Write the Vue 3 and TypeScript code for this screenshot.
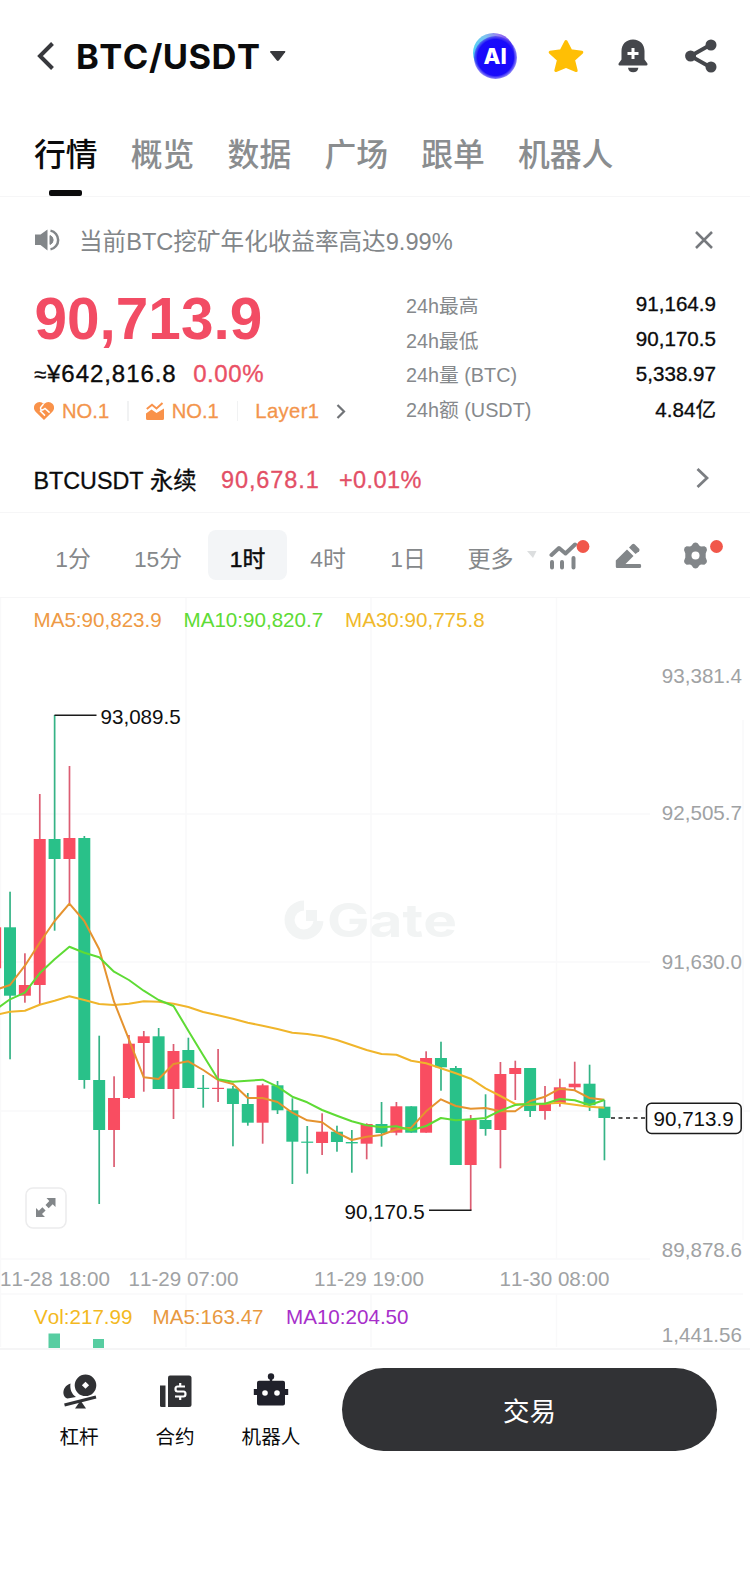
<script setup lang="ts">
import { ref } from 'vue';

type Candle = {
  up: boolean;
  high: number;
  top: number;
  bottom: number;
  low: number;
};

const tabs = ['行情', '概览', '数据', '广场', '跟单', '机器人'];
const activeTab = ref('行情');

const stats = [
  { label: '24h最高', value: '91,164.9' },
  { label: '24h最低', value: '90,170.5' },
  { label: '24h量 (BTC)', value: '5,338.97' },
  { label: '24h额 (USDT)', value: '4.84亿' },
];

const periods = ['1分', '15分', '1时', '4时', '1日'];
const activePeriod = ref('1时');

// [up, high, body top, body bottom, low] in chart units
const rawCandles: [number, number, number, number, number][] = [
  [1, 927.3, 927.3, 968.3, 968.3],
  [0, 891.7, 927.3, 995.7, 1059.3],
  [1, 953.3, 985, 995.7, 1002.7],
  [1, 794, 839, 985, 1004.3],
  [0, 715, 839, 859, 930.7],
  [1, 766, 838, 859, 903.3],
  [0, 836, 838, 1080, 1088.7],
  [0, 1035.7, 1080, 1130, 1204],
  [1, 1076.3, 1098, 1130, 1167],
  [1, 1035, 1043.7, 1098, 1099],
  [1, 1031, 1036.3, 1043, 1091.7],
  [0, 1028, 1036.3, 1089, 1089],
  [1, 1044, 1051, 1089, 1119],
  [0, 1037.7, 1050, 1088, 1088],
  [0, 1075, 1087.8, 1089, 1107.7],
  [1, 1049, 1087.8, 1089, 1102],
  [0, 1086, 1088.5, 1104, 1146.3],
  [0, 1093, 1104, 1122.7, 1125.7],
  [1, 1083.7, 1085.3, 1122.7, 1143.7],
  [0, 1081, 1085.3, 1110.3, 1114],
  [0, 1098.3, 1110.3, 1141.7, 1184],
  [0, 1126, 1141.6, 1142.8, 1173.7],
  [1, 1113.3, 1131.7, 1143, 1155],
  [0, 1125.7, 1131.7, 1142, 1151.7],
  [0, 1130, 1142, 1143.4, 1172.7],
  [1, 1123.3, 1124, 1143.7, 1159.3],
  [0, 1102, 1124, 1133, 1146.7],
  [1, 1102, 1106.3, 1132.7, 1135.3],
  [0, 1106.3, 1106.3, 1132.7, 1132.7],
  [1, 1051.3, 1058, 1132.7, 1132.7],
  [0, 1041.7, 1058, 1067.3, 1090.7],
  [0, 1066, 1068, 1165, 1165],
  [1, 1115, 1119.7, 1165, 1210.3],
  [0, 1094.3, 1120, 1129, 1135.7],
  [1, 1062, 1074, 1130, 1168.3],
  [1, 1060.7, 1068, 1074, 1100],
  [0, 1068, 1068, 1111, 1117],
  [1, 1086, 1103.3, 1111, 1119.7],
  [1, 1078.7, 1087.3, 1103.3, 1106.7],
  [1, 1061.7, 1083.7, 1087.3, 1090],
  [0, 1064.7, 1083.7, 1105.3, 1111],
  [0, 1100, 1106.7, 1118, 1160.3],
];

const candles: Candle[] = rawCandles.map(([up, high, top, bottom, low]) => ({
  up: up === 1,
  high,
  top,
  bottom,
  low,
}));

const STEP = 14.86;
const centerX = (i: number) => 10 + (i - 1) * STEP;

const toPoints = (ys: number[]) =>
  ys.map((y, i) => `${centerX(i).toFixed(1)},${y}`).join(' ');

const averages = [
  {
    color: '#f0b52b',
    points: toPoints([
      1015, 1011.7, 1010.7, 1004.7, 1000.7, 996.3, 1000, 1004, 1005, 1003.7, 1001.3, 1001.7, 1003.7,
      1007, 1012, 1015.3, 1018.7, 1022.7, 1025.7, 1029, 1032.7, 1034, 1036.3, 1040, 1045, 1050,
      1054, 1054.7, 1060.7, 1063.3, 1068.3, 1073.3, 1078.7, 1088.3, 1096, 1104, 1104.7, 1103.7,
      1102.7, 1104.7, 1106.7, 1107.7,
    ]),
  },
  {
    color: '#e5932f',
    points: toPoints([
      990, 985, 965.7, 942.7, 921, 903.7, 921, 949.3, 1001.7, 1039.3, 1077.3, 1079, 1064, 1061.3,
      1070, 1080, 1084, 1098, 1098, 1102, 1112.7, 1120.3, 1122.3, 1132.7, 1140, 1136.7, 1135,
      1129.3, 1127.7, 1111.3, 1099.3, 1106, 1108.7, 1108, 1111.3, 1111.3, 1101, 1096.7, 1088.7,
      1090.3, 1098, 1099.7,
    ]),
  },
  {
    color: '#5edb35',
    points: toPoints([
      1010, 999.3, 992.7, 973.3, 959.3, 946.7, 952.7, 957.3, 971.7, 980, 990.7, 1000, 1006, 1030.7,
      1055.3, 1079.3, 1081.7, 1080.7, 1079.7, 1086.7, 1096.7, 1102.3, 1110, 1115.7, 1121.3, 1125.3,
      1127.3, 1126.3, 1130.3, 1126, 1118, 1120.3, 1119.3, 1118, 1110.7, 1105, 1103.7, 1103.7, 1099,
      1100.3, 1105, 1100,
    ]),
  },
];

const priceAxis = [
  { y: 683.3, text: '93,381.4' },
  { y: 820.3, text: '92,505.7' },
  { y: 969, text: '91,630.0' },
  { y: 1257, text: '89,878.6' },
  { y: 1342, text: '1,441.56' },
];

const timeAxis = [
  { x: 0, text: '11-28 18:00' },
  { x: 128.5, text: '11-29 07:00' },
  { x: 314, text: '11-29 19:00' },
  { x: 499.5, text: '11-30 08:00' },
];
</script>

<template>
  <div class="page">
    <header class="header">
      <svg class="back" width="20" height="32" viewBox="0 0 20 32">
        <path d="M16.500 3.500 4 16l12.500 12.500" fill="none" stroke="#38393d" stroke-width="4" />
      </svg>
      <h1 class="pair">BTC/USDT</h1>
      <svg class="caret" width="18" height="12" viewBox="0 0 18 12">
        <path d="M2 1h13.500q1.500 0 .6 1.300L10 10.200q-1.200 1.400-2.400 0L1.300 2.300Q.5 1 2 1z" fill="#38393d" />
      </svg>
      <div class="actions">
        <svg width="46" height="50" viewBox="0 0 46 50">
          <defs>
            <linearGradient id="aiHalo" x1="0" y1=".5" x2="1" y2=".1">
              <stop offset="0" stop-color="#4fd2f5" />
              <stop offset=".4" stop-color="#7cc4ee" />
              <stop offset=".7" stop-color="#9a7cf0" />
              <stop offset="1" stop-color="#5a2df0" />
            </linearGradient>
            <radialGradient id="aiBody" cx=".5" cy=".5" r=".5">
              <stop offset="0" stop-color="#1405ff" />
              <stop offset=".84" stop-color="#1a0cfa" />
              <stop offset="1" stop-color="#3a2df0" stop-opacity=".55" />
            </radialGradient>
          </defs>
          <ellipse cx="21.500" cy="22" rx="20.500" ry="20" fill="url(#aiHalo)" />
          <ellipse cx="23.500" cy="26.500" rx="21.500" ry="21.500" fill="url(#aiBody)" />
          <text x="23.200" y="33" class="ai-text" text-anchor="middle">AI</text>
        </svg>
        <svg width="36" height="34" viewBox="0 0 36 34">
          <path
            d="M18 2.500l4.800 9.300 11 1.500-8.300 7.500 2.700 10.700L18 27.400 7.800 31.500l2.700-10.700L2.200 13.300l11-1.500z"
            fill="#ffbf05"
            stroke="#ffbf05"
            stroke-width="3"
            stroke-linejoin="round"
          />
        </svg>
        <svg width="30" height="34" viewBox="0 0 30 34">
          <path
            d="M15 .5C8 .5 3.500 5.500 3.500 12v8.500L.6 24.600Q0 26.500 1.500 26.500h27q1.500 0 .9-1.900l-2.900-4.100V12C26.500 5.500 22 .5 15 .5z"
            fill="#45474c"
          />
          <path d="M10 28.700h10.400q-.8 4.600-5.200 4.600T10 28.700z" fill="#45474c" />
          <path d="M15 9v11M9.500 14.500h11" stroke="#fff" stroke-width="3" />
        </svg>
        <svg width="32" height="34" viewBox="0 0 32 34">
          <path d="M26 5.500 5.500 17 26 28.500" fill="none" stroke="#45474c" stroke-width="3.800" />
          <circle cx="26" cy="6" r="5.500" fill="#45474c" />
          <circle cx="5.600" cy="17" r="5.500" fill="#45474c" />
          <circle cx="26" cy="28" r="5.500" fill="#45474c" />
        </svg>
      </div>
    </header>

    <nav class="tabs">
      <button
        v-for="tab in tabs"
        :key="tab"
        class="tab"
        :class="{ active: tab === activeTab }"
        @click="activeTab = tab"
      >
        {{ tab }}
      </button>
    </nav>

    <div class="notice">
      <svg width="26" height="22" viewBox="0 0 26 22">
        <path d="M0 5.500h5.500L12.500.5v21L5.500 16H0z" fill="#828689" />
        <path d="M15 6.500a4.800 4.800 0 0 1 0 9z" fill="#828689" stroke="#828689" />
        <path d="M15.500 1.600a9.600 9.600 0 0 1 0 18.800" fill="none" stroke="#828689" stroke-width="2.500" />
      </svg>
      <span class="notice-text">当前BTC挖矿年化收益率高达9.99%</span>
      <svg class="close" width="18" height="18" viewBox="0 0 18 18">
        <path d="M1 1l16 16M17 1L1 17" stroke="#76797d" stroke-width="2.500" />
      </svg>
    </div>

    <section class="summary">
      <div class="quote">
        <div class="price">90,713.9</div>
        <div class="fiat">
          <span class="fiat-value"><i class="approx">≈</i>¥642,816.8</span>
          <span class="change">0.00%</span>
        </div>
        <div class="badges">
          <svg width="20" height="18" viewBox="0 0 20 18">
            <path d="M10 18 1.600 9.800A5.600 5.600 0 0 1 9.600 1.700L10 2l.4-.3a5.600 5.600 0 0 1 8 8.100z" fill="#f9924a" />
            <path d="M9.500 2 6.600 5.600q-.4 3 2.400 2.200l2-1.400 4.600 4.200M6 8.600l5 5" fill="none" stroke="#fff" stroke-width="1.500" />
          </svg>
          <span class="rank">NO.1</span>
          <i class="sep"></i>
          <svg width="18" height="18" viewBox="0 0 18 18">
            <path d="M0 11.500l5.500-4 5 3.500L18 6.500V16.500q0 1.500-1.500 1.500h-15Q0 18 0 16.500z" fill="#f9924a" />
            <path d="M.8 7 6 2.800l4.500 3.700L16.500 1" fill="none" stroke="#f9924a" stroke-width="2" />
          </svg>
          <span class="rank">NO.1</span>
          <i class="sep"></i>
          <span class="layer">Layer1</span>
          <svg class="more" width="10" height="15" viewBox="0 0 10 15">
            <path d="M1.500 1l6.500 6.500L1.500 14" fill="none" stroke="#707377" stroke-width="2.200" />
          </svg>
        </div>
      </div>
      <dl class="stats">
        <div v-for="item in stats" :key="item.label" class="stat">
          <dt>{{ item.label }}</dt>
          <dd>{{ item.value }}</dd>
        </div>
      </dl>
    </section>

    <div class="perp">
      <span class="perp-name">BTCUSDT 永续</span>
      <span class="perp-price">90,678.1</span>
      <span class="perp-change">+0.01%</span>
      <svg width="13" height="20" viewBox="0 0 13 20">
        <path d="M1.500 1l9.500 9-9.500 9" fill="none" stroke="#7b7e82" stroke-width="2.800" />
      </svg>
    </div>

    <div class="periods">
      <button
        v-for="period in periods"
        :key="period"
        class="period"
        :class="{ active: period === activePeriod }"
        @click="activePeriod = period"
      >
        {{ period }}
      </button>
      <span class="period-more">更多</span>
      <svg class="tri" width="10" height="8" viewBox="0 0 10 8">
        <path d="M0 0h9.500L6 7z" fill="#dcdedf" />
      </svg>
      <div class="tools">
        <svg width="42" height="32" viewBox="0 0 42 32">
          <path
            d="M2.500 16 10 9l6.500 5.500L26 5.500"
            fill="none"
            stroke="#828689"
            stroke-width="4"
            stroke-linecap="round"
            stroke-linejoin="round"
          />
          <path d="M3 23v5.500M13 23v5.500M24.500 19v9.500" stroke="#828689" stroke-width="4" stroke-linecap="round" />
          <circle cx="34" cy="7.500" r="6.400" fill="#f1574a" />
        </svg>
        <svg width="28" height="32" viewBox="0 0 28 32">
          <path d="M.8 21.500 12 10.500l6.500 6.500-8 8H25q1.200 0 1.200 2t-1.200 2H2Q.8 29 .8 27.500z" fill="#828689" />
          <path d="M14 8.500l3.200-3.200q1.200-1 2.400 0l4.500 4.500q1 1.200 0 2.400L20.500 15z" fill="#828689" />
        </svg>
        <svg width="42" height="32" viewBox="0 0 42 32">
          <path
            d="M11.300 4.200q2.200-1.500 4.400 0l1.800 2.600 1.500.8 3.400-.3q2.600.8 2.600 3.600l-1.300 3.600v4l1.300 3.600q0 2.800-2.600 3.600l-3.400-.3-1.500.8-1.800 2.600q-2.200 1.500-4.400 0L9.500 26.200 8 25.400l-3.400.3Q2 24.900 2 22.100l1.300-3.600v-4L2 10.900q0-2.800 2.600-3.600L8 7.600l1.500-.8z"
            fill="#828689"
          />
          <circle cx="13.500" cy="16.500" r="4" fill="#fff" />
          <circle cx="34.500" cy="7.500" r="6.400" fill="#f1574a" />
        </svg>
      </div>
    </div>

    <svg class="chart" width="750" height="750" viewBox="0 598 750 750">
      <g stroke="#f9f9fa" stroke-width="1.500">
        <path d="M186 598V1259M371 598V1259M556.500 598V1259" />
        <path d="M0 814H650M0 962H650M0 1111H750M0 1259H650M0 1294H743" />
        <path d="M186 1294V1347M371 1294V1347M556.500 1294V1347M.5 598V1347M743 720V1240" />
      </g>

      <g class="watermark">
        <path
          d="M304 905.500a14.500 14.500 0 1 0 14.500 15.500"
          fill="none"
          stroke="#f2f4f4"
          stroke-width="10"
        />
        <path d="M306 910h11v11h-11z" fill="#f2f4f4" />
        <text x="327" y="937" textLength="130" lengthAdjust="spacingAndGlyphs">Gate</text>
      </g>

      <g v-for="(c, i) in candles" :key="i" :fill="c.up ? '#f94d61' : '#29c189'">
        <rect :x="centerX(i) - 0.8" :y="c.high" width="1.700" :height="c.low - c.high" :class="c.up ? 'wick-up' : 'wick-down'" />
        <rect :x="centerX(i) - 6" :y="c.top" width="12" :height="c.bottom - c.top" />
      </g>

      <polyline
        v-for="ma in averages"
        :key="ma.color"
        :points="ma.points"
        :stroke="ma.color"
        fill="none"
        stroke-width="2"
        stroke-linejoin="round"
      />

      <path d="M54.500 715.300H96.500M429 1210.300H471.500" stroke="#1b1b1b" stroke-width="1.400" />
      <g class="mark">
        <text x="100.500" y="724">93,089.5</text>
        <text x="344.500" y="1219.300">90,170.5</text>
      </g>

      <path d="M611 1118H646" stroke="#1b1b1b" stroke-width="1.500" stroke-dasharray="4 3.500" />
      <rect x="646.500" y="1103.300" width="94.700" height="30.200" rx="5" fill="#fff" stroke="#1b1b1b" stroke-width="1.500" />
      <text class="mark" x="653.500" y="1126.300">90,713.9</text>

      <g class="legend">
        <text x="33.500" y="627.300" fill="#ee9a45">MA5:90,823.9</text>
        <text x="183.500" y="627.300" fill="#5edb35">MA10:90,820.7</text>
        <text x="345" y="627.300" fill="#f0b92b">MA30:90,775.8</text>
        <text x="34" y="1324.300" fill="#f3b91f">Vol:217.99</text>
        <text x="152.500" y="1324.300" fill="#e8993f">MA5:163.47</text>
        <text x="286" y="1324.300" fill="#a72fca">MA10:204.50</text>
      </g>

      <text v-for="p in priceAxis" :key="p.text" class="axis" x="742" :y="p.y" text-anchor="end">{{ p.text }}</text>
      <text v-for="t in timeAxis" :key="t.text" class="axis" :x="t.x" y="1285.500">{{ t.text }}</text>

      <path d="M48.500 1333.500h11.500V1348H48.500zM93 1339h11V1348H93z" fill="#57cda1" />

      <rect x="26" y="1188" width="40" height="40" rx="7" fill="#fff" stroke="#ececed" stroke-width="1.500" />
      <path
        d="M46.500 1198h9v9l-2.800-2.800-4 4-3.200-3.200 3.800-4zM36 1208l2.800 2.800 3.600-3.600 3.200 3.200-3.600 3.600L45 1217h-9z"
        fill="#828689"
      />
    </svg>

    <footer class="footer">
      <div class="entry">
        <svg width="36" height="38" viewBox="0 0 36 38">
          <path d="M9.500 11.500c-5 1.500-7.700 6-7 10.500.3 2.300 2 4 4 4.600l8.500-1.600c-4.500-3-6.300-8-5.500-13.500z" fill="#303134" />
          <path
            d="M24.500 2.500a10.800 10.800 0 1 1 0 21.600 10.800 10.800 0 0 1 0-21.600zM24.500 9.800l-3.600 3.500 3.600 3.500 3.600-3.500z"
            fill="#303134"
            fill-rule="evenodd"
          />
          <path d="M3.500 33 35 25" stroke="#303134" stroke-width="3.200" />
          <path d="M19.500 28.500l5.500 8H14z" fill="#303134" />
        </svg>
        <span>杠杆</span>
      </div>
      <div class="entry">
        <svg width="36" height="38" viewBox="0 0 36 38">
          <path d="M3 13.500h5.500V35H4.500Q3 35 3 33.500z" fill="#303134" />
          <path d="M13 3.500h19q2.500 0 2.500 2.500v26.500q0 2.500-2.500 2.500H11V5.500q0-2 2-2z" fill="#303134" />
          <path
            d="M28 14.500h-7.500q-2 0-2 2.500t2 2.500h6q2 0 2 2.500t-2 2.500H18M23.200 11v3.500M23.200 24.500V28"
            fill="none"
            stroke="#fff"
            stroke-width="2.200"
          />
        </svg>
        <span>合约</span>
      </div>
      <div class="entry">
        <svg width="36" height="38" viewBox="0 0 36 38">
          <circle cx="18" cy="4.500" r="3.200" fill="#20212b" />
          <path
            d="M16.800 6h2.400v2.700H30q2 0 2 2V17h3.200v6H32v8.500q0 2-2 2H6q-2 0-2-2V23H.8v-6H4v-6.300q0-2 2-2h10.800z"
            fill="#20212b"
          />
          <circle cx="12" cy="21" r="2.800" fill="#fff" />
          <circle cx="24" cy="21" r="2.800" fill="#fff" />
        </svg>
        <span>机器人</span>
      </div>
      <button class="trade">交易</button>
    </footer>
  </div>
</template>

<style>
body {
  background: #fff;
}
</style>

<style scoped>
.page {
  width: 750px;
  height: 1573px;
  overflow: hidden;
  background: #fff;
  color: #0b0b0c;
  font-family: 'Liberation Sans', 'Noto Sans CJK SC', sans-serif;
  font-kerning: none;
  display: flex;
  flex-direction: column;
}

.page > * {
  box-sizing: border-box;
  flex: none;
}

svg {
  display: block;
  flex: none;
}

button {
  border: 0;
  padding: 0;
  background: none;
  font-family: inherit;
  cursor: pointer;
}

.header {
  height: 112px;
  padding: 0 33px 0 36px;
  display: flex;
  align-items: center;
}

.pair {
  margin: 2px 0 0 20px;
  font-family: Inter, sans-serif;
  font-size: 34.5px;
  font-weight: 700;
  line-height: 44px;
  letter-spacing: 0.5px;
}

.caret {
  margin-left: 8px;
}

.actions {
  margin-left: auto;
  display: flex;
  align-items: center;
  gap: 34px;
}

.actions svg:first-child {
  margin-right: -4px;
}

.actions svg:last-child {
  margin-left: 3px;
}

.ai-text {
  fill: #fff;
  font-family: Inter, sans-serif;
  font-size: 22px;
  font-weight: 800;
}

.tabs {
  height: 85px;
  padding-left: 34px;
  border-bottom: 1.5px solid #f6f6f7;
  display: flex;
  gap: 33.2px;
}

.tab {
  position: relative;
  height: 84px;
  padding-top: 2px;
  font-size: 31.8px;
  font-weight: 500;
  line-height: 82px;
  color: #8a8d8f;
}

.tab.active {
  color: #0b0b0c;
}

.tab.active::after {
  content: '';
  position: absolute;
  left: 14.5px;
  bottom: 0;
  width: 33px;
  height: 6.5px;
  border-radius: 2px;
  background: #0b0b0c;
}

.notice {
  height: 86px;
  padding: 0 37px 0 35px;
  display: flex;
  align-items: center;
  color: #828689;
}

.notice svg {
  margin-bottom: 1px;
}

.notice-text {
  margin: 0 0 1px 18px;
  font-size: 23.6px;
}

.close {
  margin-left: auto;
}

.summary {
  height: 161px;
  padding: 0 34px;
  display: flex;
  justify-content: space-between;
}

.quote {
  color: #ea5065;
}

.price {
  height: 75px;
  margin-left: 0.5px;
  line-height: 72px;
  font-size: 58.5px;
  font-weight: 700;
  color: #f24c64;
}

.fiat {
  height: 31px;
  line-height: 31px;
  font-size: 24px;
  display: flex;
  gap: 16.5px;
  -webkit-text-stroke: 0.35px currentColor;
}

.fiat-value {
  color: #0b0b0c;
  letter-spacing: 0.95px;
}

.fiat .change {
  letter-spacing: 0.6px;
}

.approx {
  font-style: normal;
  font-size: 22px;
}

.badges {
  height: 44px;
  display: flex;
  align-items: center;
  font-size: 20.2px;
  color: #f3954c;
  -webkit-text-stroke: 0.3px currentColor;
}

.rank {
  margin-left: 8px;
}

.sep {
  width: 1.5px;
  height: 20px;
  margin: 0 17px 0 18px;
  background: #f1f2f3;
}

.layer {
  letter-spacing: 0.4px;
}

.more {
  margin-left: 17px;
}

.stats {
  width: 310px;
  margin: 4px 0 0;
}

.stat {
  height: 34.7px;
  display: flex;
  justify-content: space-between;
  align-items: center;
  font-size: 20.6px;
}

.stat dt {
  font-size: 19.8px;
  color: #86898c;
}

.stat dd {
  margin: 0;
  font-weight: 400;
  -webkit-text-stroke: 0.3px currentColor;
}

.perp {
  height: 69px;
  padding: 0 41px 0 33.5px;
  border-bottom: 1.5px solid #f6f6f7;
  display: flex;
  align-items: center;
  font-size: 23.5px;
  color: #e34f66;
  -webkit-text-stroke: 0.3px currentColor;
}

.perp-name {
  width: 187.5px;
  margin-top: 2px;
  font-size: 23.3px;
  color: #0b0b0c;
}

.perp-price {
  width: 118px;
  margin-top: 4px;
  letter-spacing: 0.9px;
}

.perp-change {
  margin-top: 4px;
  letter-spacing: 0.4px;
}

.perp svg {
  margin-left: auto;
}

.periods {
  height: 85px;
  padding: 0 26px 0 38px;
  border-bottom: 1.5px solid #f6f6f7;
  display: flex;
  align-items: center;
  font-size: 23px;
  color: #85888a;
}

.period {
  width: 70px;
  height: 50px;
  padding-top: 8px;
  margin-right: 15px;
  border-radius: 8px;
  font-size: 22.8px;
  line-height: 42px;
  color: inherit;
}

.period:nth-child(5) {
  margin-left: -5px;
}

.period.active {
  width: 79px;
  margin-right: 6px;
  background: #f3f5f7;
  color: #0b0b0c;
  -webkit-text-stroke: 0.5px currentColor;
}

.period-more {
  margin: 4px 0 0 9.5px;
}

.tri {
  margin-left: 13px;
}

.tools {
  margin-left: auto;
  display: flex;
  align-items: center;
  gap: 24px;
}

.tools svg:last-child {
  margin-left: 15px;
}

.chart {
  height: 750px;
}

.chart text {
  font-size: 20.6px;
}

.watermark .logo,
.watermark text {
  fill: #f2f4f4;
}

.watermark text {
  font-family: Inter, sans-serif;
  font-size: 46px;
  font-weight: 700;
}

.wick-up {
  fill: #dc5d72;
}

.wick-down {
  fill: #35b386;
}

.mark {
  fill: #0f0f10;
}

.axis {
  fill: #a0a2a4;
}

.footer {
  height: 225px;
  padding: 18px 33px 0 31px;
  border-top: 2px solid #f5f5f6;
  display: flex;
  align-items: flex-start;
}

.entry {
  width: 96px;
  padding-top: 4px;
  display: flex;
  flex-direction: column;
  align-items: center;
  gap: 13px;
  font-size: 19.6px;
  line-height: 28px;
}

.trade {
  width: 375px;
  height: 83px;
  margin-left: auto;
  border-radius: 42px;
  background: #313235;
  color: #fff;
  font-size: 26.5px;
}
</style>
